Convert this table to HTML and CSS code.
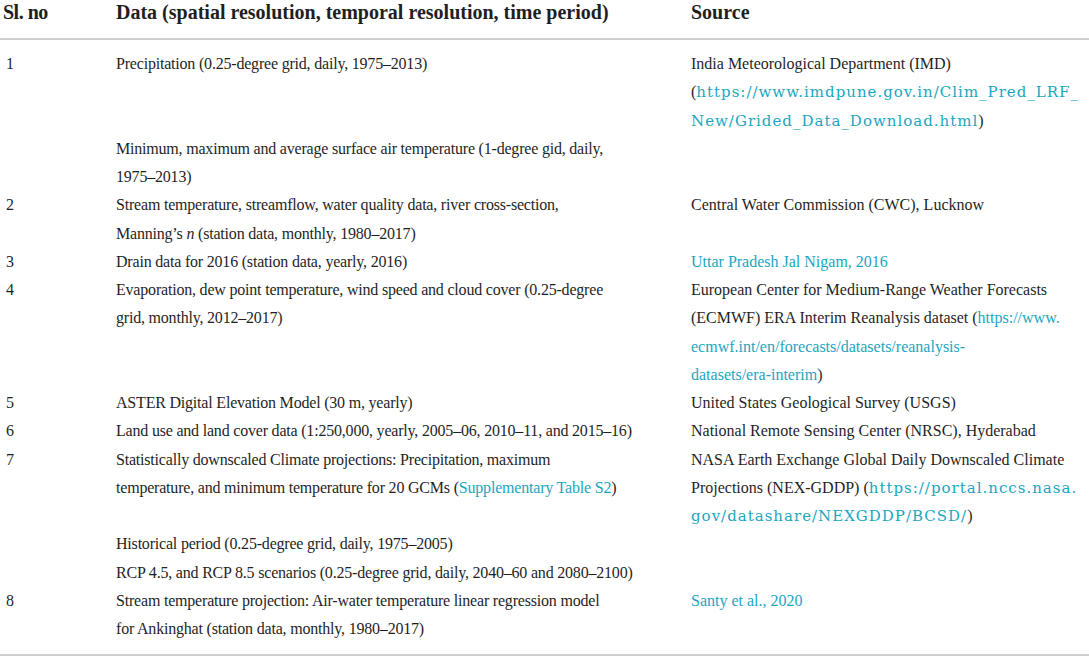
FILE: index.html
```html
<!DOCTYPE html>
<html lang="en">
<head>
<meta charset="utf-8">
<title>Data sources</title>
<link rel="stylesheet" href="styles.css">
</head>
<body>
<table class="data-table">
  <colgroup>
    <col class="c-no">
    <col class="c-data">
    <col class="c-src">
  </colgroup>
  <thead>
    <tr>
      <th class="no">Sl. no</th>
      <th class="data">Data (spatial resolution, temporal resolution, time period)</th>
      <th class="src">Source</th>
    </tr>
  </thead>
  <tbody>
    <tr class="first">
      <td class="no">1</td>
      <td class="data">Precipitation (0.25-degree grid, daily, 1975–2013)</td>
      <td class="src">India Meteorological Department (IMD)<br>(<a class="tt">https://www.imdpune.gov.in/Clim_Pred_LRF_<br>New/Grided_Data_Download.html</a>)</td>
    </tr>
    <tr>
      <td class="no"></td>
      <td class="data">Minimum, maximum and average surface air temperature (1-degree gid, daily,<br>1975–2013)</td>
      <td class="src"></td>
    </tr>
    <tr>
      <td class="no">2</td>
      <td class="data">Stream temperature, streamflow, water quality data, river cross-section,<br>Manning’s <i>n</i> (station data, monthly, 1980–2017)</td>
      <td class="src">Central Water Commission (CWC), Lucknow</td>
    </tr>
    <tr>
      <td class="no">3</td>
      <td class="data">Drain data for 2016 (station data, yearly, 2016)</td>
      <td class="src"><a class="lnk">Uttar Pradesh Jal Nigam, 2016</a></td>
    </tr>
    <tr>
      <td class="no">4</td>
      <td class="data">Evaporation, dew point temperature, wind speed and cloud cover (0.25-degree<br>grid, monthly, 2012–2017)</td>
      <td class="src">European Center for Medium-Range Weather Forecasts<br>(ECMWF) ERA Interim Reanalysis dataset (<a class="lnk">https://www.<br>ecmwf.int/en/forecasts/datasets/reanalysis-<br>datasets/era-interim</a>)</td>
    </tr>
    <tr>
      <td class="no">5</td>
      <td class="data">ASTER Digital Elevation Model (30 m, yearly)</td>
      <td class="src">United States Geological Survey (USGS)</td>
    </tr>
    <tr>
      <td class="no">6</td>
      <td class="data">Land use and land cover data (1:250,000, yearly, 2005–06, 2010–11, and 2015–16)</td>
      <td class="src">National Remote Sensing Center (NRSC), Hyderabad</td>
    </tr>
    <tr>
      <td class="no">7</td>
      <td class="data">Statistically downscaled Climate projections: Precipitation, maximum<br>temperature, and minimum temperature for 20 GCMs (<a class="lnk">Supplementary Table S2</a>)</td>
      <td class="src">NASA Earth Exchange Global Daily Downscaled Climate<br>Projections (NEX-GDDP) (<a class="tt">https://portal.nccs.nasa.<br>gov/datashare/NEXGDDP/BCSD/</a>)</td>
    </tr>
    <tr>
      <td class="no"></td>
      <td class="data">Historical period (0.25-degree grid, daily, 1975–2005)</td>
      <td class="src"></td>
    </tr>
    <tr>
      <td class="no"></td>
      <td class="data">RCP 4.5, and RCP 8.5 scenarios (0.25-degree grid, daily, 2040–60 and 2080–2100)</td>
      <td class="src"></td>
    </tr>
    <tr class="last">
      <td class="no">8</td>
      <td class="data">Stream temperature projection: Air-water temperature linear regression model<br>for Ankinghat (station data, monthly, 1980–2017)</td>
      <td class="src"><a class="lnk">Santy et al., 2020</a></td>
    </tr>
  </tbody>
</table>
</body>
</html>
```

FILE: styles.css
```css
html, body {
  margin: 0;
  padding: 0;
  background: #ffffff;
}

.data-table {
  width: 1089px;
  border-collapse: collapse;
  table-layout: fixed;
  font-family: "Liberation Serif", "Times New Roman", serif;
  color: #1f1f1f;
}

.c-no { width: 116px; }
.c-data { width: 575px; }
.c-src { width: 398px; }

.data-table th {
  font-weight: bold;
  font-size: 20px;
  line-height: 24px;
  text-align: left;
  padding: 0 0 14px 0;
  border-bottom: 2px solid #cfcfcf;
  white-space: nowrap;
}

.data-table th.no {
  padding-left: 3px;
  letter-spacing: -0.5px;
}

.data-table td {
  vertical-align: top;
  padding: 0;
  font-size: 16px;
  line-height: 28.25px;
  white-space: nowrap;
}

.data-table td.no { padding-left: 6px; }

.data-table td.data {
  letter-spacing: -0.2px;
}

.data-table tr.first td { padding-top: 10px; }
.data-table tr.last td {
  padding-bottom: 11px;
  border-bottom: 2px solid #cfcfcf;
}

.lnk {
  color: #1ba6bf;
  text-decoration: none;
}

.tt {
  color: #1ba6bf;
  font-family: "DejaVu Serif", serif;
  font-size: 15px;
  letter-spacing: 1px;
  text-decoration: none;
}
```
